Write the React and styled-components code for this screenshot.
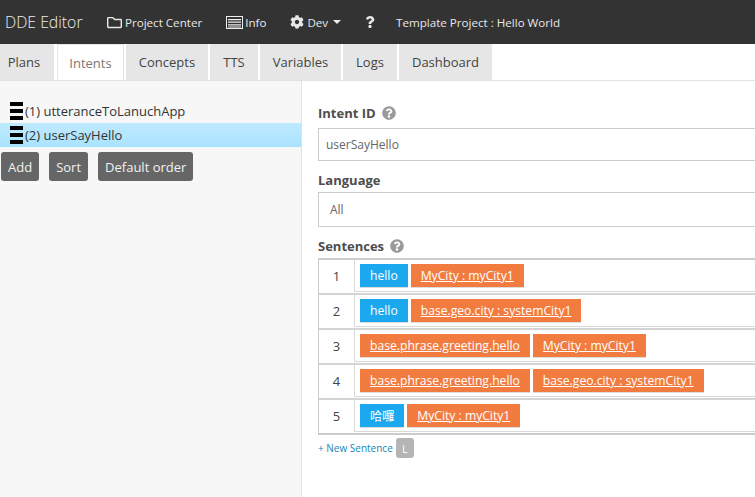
import React from "react";
import styled, { createGlobalStyle } from "styled-components";
import { FaCog, FaQuestion, FaRegFolder, FaQuestionCircle } from "react-icons/fa";

const GlobalStyle = createGlobalStyle`
  html, body {
    margin: 0;
    padding: 0;
    background: #fff;
    font-family: "Open Sans", "Noto Sans CJK TC", sans-serif;
    color: #333;
  }
  * { box-sizing: border-box; }
`;

const Page = styled.div`
  width: 755px;
  height: 497px;
  overflow: hidden;
  display: flex;
  flex-direction: column;
`;

const Navbar = styled.div`
  height: 44px;
  flex: none;
  background: #333;
  color: #eee;
  display: flex;
  align-items: center;
  padding-left: 5px;
`;

const Brand = styled.div`
  font-size: 15.8px;
  font-weight: 300;
  width: 102px;
  white-space: nowrap;
`;

const NavItem = styled.div`
  display: flex;
  align-items: center;
  gap: ${(p) => p.$gap || 3}px;
  font-size: 11.6px;
  white-space: nowrap;
  margin-right: ${(p) => p.$right || 0}px;
  color: #e8e8e8;
`;

const Caret = styled.span`
  width: 0;
  height: 0;
  margin-left: 2px;
  border-left: 4px solid transparent;
  border-right: 4px solid transparent;
  border-top: 4px solid #eee;
`;

const TabBar = styled.div`
  height: 37px;
  flex: none;
  display: flex;
  gap: 2px;
  border-bottom: 1px solid #e2e2e2;
`;

const Tab = styled.div`
  width: ${(p) => p.$width}px;
  margin-left: ${(p) => p.$left || 0}px;
  padding-right: ${(p) => p.$shift || 0}px;
  display: flex;
  align-items: center;
  justify-content: center;
  font-size: 13px;
  background: ${(p) => (p.$active ? "#fff" : "#e6e6e6")};
  color: ${(p) => (p.$active ? "#777" : "#444")};
  border: ${(p) => (p.$active ? "1px solid #e6e6e6" : "none")};
  border-bottom: none;
`;

const Body = styled.div`
  flex: 1;
  display: flex;
  min-height: 0;
`;

const Sidebar = styled.div`
  width: 302px;
  flex: none;
  background: #f7f7f7;
  border-right: 1px solid #e2e2e2;
  padding-top: 18px;
`;

const IntentRow = styled.div`
  height: 24px;
  width: 301px;
  display: flex;
  align-items: center;
  padding-left: 10px;
  font-size: 13px;
  color: #333;
  background: ${(p) => (p.$selected ? "linear-gradient(#bfeaff, #a9e3ff)" : "transparent")};
`;

const Handle = styled.div`
  width: 13px;
  height: 18px;
  flex: none;
  margin-right: 2px;
  display: flex;
  flex-direction: column;
  justify-content: space-between;
  span {
    display: block;
    height: 4px;
    background: #000;
  }
`;

const ButtonRow = styled.div`
  display: flex;
  gap: 10px;
  padding: 5px 0 0 1px;
`;

const GrayButton = styled.div`
  height: 29px;
  padding: 0 7px;
  display: flex;
  align-items: center;
  background: #666;
  color: #f2f2f2;
  font-size: 13px;
  border-radius: 3px;
`;

const Main = styled.div`
  flex: 1;
  min-width: 0;
  padding: 23px 0 0 16px;
`;

const Label = styled.div`
  display: flex;
  align-items: center;
  gap: 6px;
  height: 18px;
  font-size: 13px;
  font-weight: 700;
  color: #4d4d4d;
  svg { color: #999; }
`;

const Field = styled.div`
  width: 600px;
  height: ${(p) => p.$height}px;
  margin: ${(p) => p.$top}px 0 10px;
  display: flex;
  align-items: center;
  padding-left: ${(p) => p.$pad}px;
  border: 1px solid #ccc;
  font-size: 12px;
  color: #666;
`;

const SentenceTable = styled.div`
  width: 600px;
  margin-top: 3px;
  border: 1px solid #ccc;
  border-top-width: 2px;
  border-bottom-width: 2px;
`;

const SentenceRow = styled.div`
  height: 35px;
  display: flex;
  border-bottom: 2px solid #d4d4d4;
  &:last-child {
    height: 33px;
    border-bottom: none;
  }
`;

const SentenceNumber = styled.div`
  width: 35px;
  flex: none;
  display: flex;
  align-items: center;
  justify-content: center;
  padding-bottom: 2px;
  font-size: 13px;
  color: #444;
`;

const TagCell = styled.div`
  flex: 1;
  height: 32px;
  display: flex;
  gap: 3px;
  align-items: flex-start;
  padding: 4px 0 0 5px;
  border-left: 1px solid #d9d9d9;
  border-bottom: 1px solid #d9d9d9;
`;

const Tag = styled.div`
  height: 23px;
  display: flex;
  align-items: center;
  padding: 0 10px;
  font-size: 12.15px;
  white-space: nowrap;
  color: #fff;
  background: ${(p) => (p.$entity ? "#f27c3f" : "#1ba8ee")};
  text-decoration: ${(p) => (p.$entity ? "underline" : "none")};
  box-shadow: 0 1px 0 #ddd;
`;

const NewSentence = styled.div`
  display: flex;
  align-items: center;
  gap: 3px;
  margin-top: 3px;
  font-size: 10px;
  color: #1187b8;
`;

const ShortcutKey = styled.div`
  width: 18px;
  height: 20px;
  display: flex;
  align-items: center;
  justify-content: center;
  background: #b5b5b5;
  color: #fff;
  font-size: 11px;
  border-radius: 3px;
`;

// panel icon of the Info link: outlined box with a solid band of lines
const InfoIcon = () => (
  <svg width="17" height="13" viewBox="0 0 17 13">
    <rect x="0.5" y="0.5" width="16" height="12" fill="none" stroke="#eee" />
    <path d="M2 3h13v1.2H2zM2 5.6h13v1.2H2zM2 8.2h13v1.2H2zM2 10.4h13v1H2z" fill="#eee" />
  </svg>
);

const tabs = [
  { name: "Plans", width: 54, shift: 6 },
  { name: "Intents", width: 67, left: 1, active: true },
  { name: "Concepts", width: 82 },
  { name: "TTS", width: 48 },
  { name: "Variables", width: 81 },
  { name: "Logs", width: 54 },
  { name: "Dashboard", width: 93 },
];

const sentences = [
  [["hello"], ["MyCity : myCity1", true]],
  [["hello"], ["base.geo.city : systemCity1", true]],
  [["base.phrase.greeting.hello", true], ["MyCity : myCity1", true]],
  [["base.phrase.greeting.hello", true], ["base.geo.city : systemCity1", true]],
  [["哈囉"], ["MyCity : myCity1", true]],
];

const App = () => (
  <Page>
    <GlobalStyle />
    <Navbar>
      <Brand>DDE Editor</Brand>
      <NavItem $right={24}>
        <FaRegFolder size={15} />
        Project Center
      </NavItem>
      <NavItem $right={24} $gap={2}>
        <InfoIcon />
        Info
      </NavItem>
      <NavItem $right={23}>
        <FaCog size={14} />
        Dev
        <Caret />
      </NavItem>
      <NavItem $right={20}>
        <FaQuestion size={12} />
      </NavItem>
      <NavItem>Template Project : Hello World</NavItem>
    </Navbar>
    <TabBar>
      {tabs.map((tab) => (
        <Tab key={tab.name} $width={tab.width} $left={tab.left} $shift={tab.shift} $active={tab.active}>
          {tab.name}
        </Tab>
      ))}
    </TabBar>
    <Body>
      <Sidebar>
        <IntentRow>
          <Handle><span /><span /><span /></Handle>
          (1) utteranceToLanuchApp
        </IntentRow>
        <IntentRow $selected>
          <Handle><span /><span /><span /></Handle>
          (2) userSayHello
        </IntentRow>
        <ButtonRow>
          <GrayButton>Add</GrayButton>
          <GrayButton>Sort</GrayButton>
          <GrayButton>Default order</GrayButton>
        </ButtonRow>
      </Sidebar>
      <Main>
        <Label>
          Intent ID <FaQuestionCircle size={14} />
        </Label>
        <Field $height={33} $top={6} $pad={7}>userSayHello</Field>
        <Label>Language</Label>
        <Field $height={35} $top={3} $pad={11}>All</Field>
        <Label>
          Sentences <FaQuestionCircle size={14} />
        </Label>
        <SentenceTable>
          {sentences.map((tags, i) => (
            <SentenceRow key={i}>
              <SentenceNumber>{i + 1}</SentenceNumber>
              <TagCell>
                {tags.map(([text, entity]) => (
                  <Tag key={text} $entity={entity}>{text}</Tag>
                ))}
              </TagCell>
            </SentenceRow>
          ))}
        </SentenceTable>
        <NewSentence>
          + New Sentence
          <ShortcutKey>L</ShortcutKey>
        </NewSentence>
      </Main>
    </Body>
  </Page>
);

export default App;
